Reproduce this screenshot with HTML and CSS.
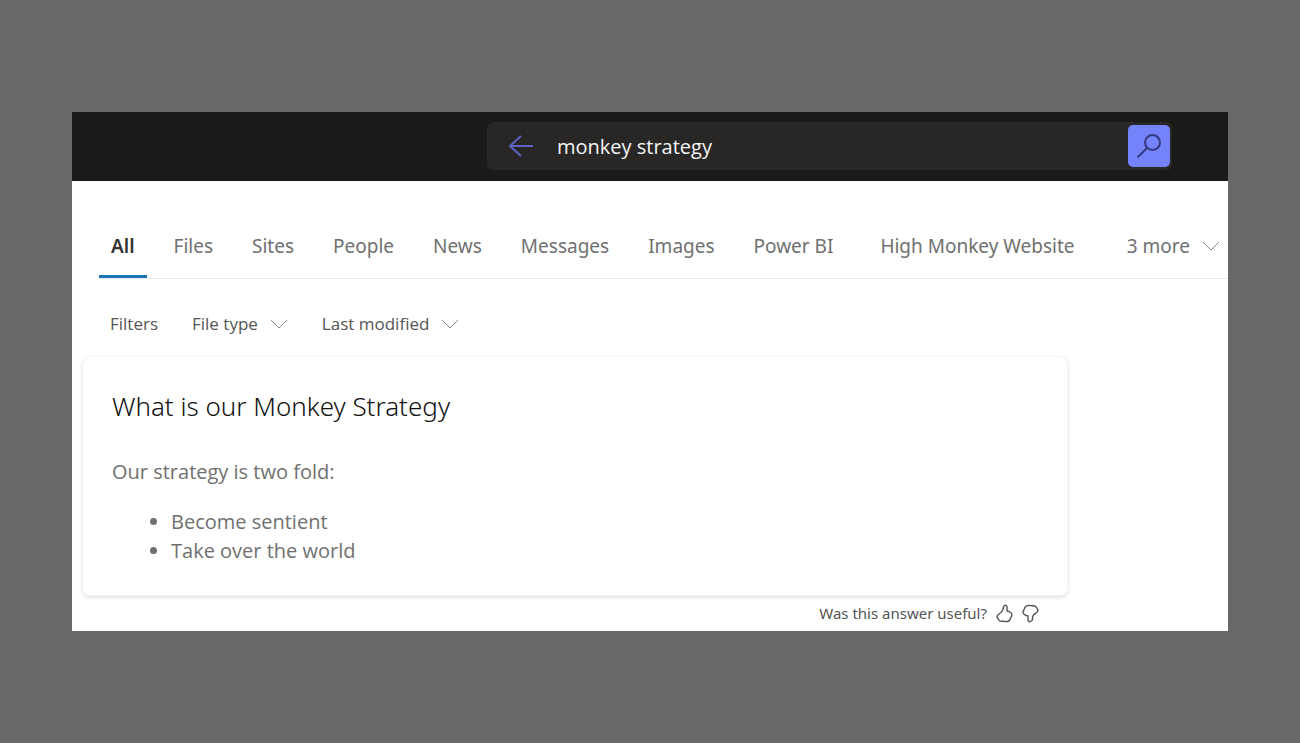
FILE: index.html
```
<!DOCTYPE html>
<html lang="en">
	<head>
		<meta charset="UTF-8">
		<title>monkey strategy - Search</title>
		<link rel="stylesheet" href="styles.css">
	</head>
	<body>
		<div class="window">
			<header class="topbar">
				<form class="search">
					<button class="back" type="button" aria-label="Back">
						<svg width="26" height="24" viewBox="0 0 26 24"><path d="M25 12H2M13 2L2 12L13 22"/></svg>
					</button>
					<input class="search-input" type="text" value="monkey strategy" aria-label="Search">
					<button class="search-btn" type="submit" aria-label="Search">
						<svg width="26" height="26" viewBox="0 0 26 26"><circle cx="16.500" cy="9.500" r="7.500"/><path d="M11 15L1.500 24.500"/></svg>
					</button>
				</form>
			</header>

			<nav class="tabs">
				<a class="tab active" href="#">All</a>
				<a class="tab" href="#">Files</a>
				<a class="tab" href="#">Sites</a>
				<a class="tab" href="#">People</a>
				<a class="tab" href="#">News</a>
				<a class="tab" href="#">Messages</a>
				<a class="tab" href="#">Images</a>
				<a class="tab" href="#">Power BI</a>
				<a class="tab custom" href="#">High Monkey Website</a>
				<button class="tab more" type="button">3 more
					<svg class="chevron" width="18" height="10" viewBox="0 0 18 10"><path d="M1 1L9 9L17 1"/></svg>
				</button>
			</nav>

			<div class="filters">
				<span class="filters-title">Filters</span>
				<button class="filter" type="button">File type
					<svg class="chevron" width="18" height="10" viewBox="0 0 18 10"><path d="M1 1L9 9L17 1"/></svg>
				</button>
				<button class="filter" type="button">Last modified
					<svg class="chevron" width="18" height="10" viewBox="0 0 18 10"><path d="M1 1L9 9L17 1"/></svg>
				</button>
			</div>

			<main class="result">
				<div class="answer">
					<h2 class="answer-title">What is our Monkey Strategy</h2>
					<p class="answer-text">Our strategy is two fold:</p>
					<ul class="answer-list">
						<li>Become sentient</li>
						<li>Take over the world</li>
					</ul>
				</div>
				<div class="feedback">
					<span>Was this answer useful?</span>
					<button class="vote" type="button" aria-label="Yes">
						<svg width="17" height="19" viewBox="0 0 17 19"><path d="M8.500 1.500C10 0.500 11.500 2 11 4L11 7C14 7.500 16.300 9 15.800 11.500L14.500 14.500C13.500 17.500 11.500 18 9 17.500L4 17C2.500 16.500 2.500 15 1.500 14C0.500 12.500 1.500 11 3 10C6 8 7.500 5 7.500 2.500Z"/></svg>
					</button>
					<button class="vote" type="button" aria-label="No">
						<svg class="down" width="17" height="19" viewBox="0 0 17 19"><path d="M8.500 1.500C10 0.500 11.500 2 11 4L11 7C14 7.500 16.300 9 15.800 11.500L14.500 14.500C13.500 17.500 11.500 18 9 17.500L4 17C2.500 16.500 2.500 15 1.500 14C0.500 12.500 1.500 11 3 10C5 9 6 8 6.500 6L6.500 3Z"/></svg>
					</button>
				</div>
			</main>
		</div>
	</body>
</html>
```
FILE: styles.css
```
* {
	box-sizing: border-box;
}
body,h2,p,ul {
	margin: 0;
	padding: 0;
}
body {
	min-height: 100vh;
	display: flex;
	align-items: center;
	padding: 0 72px;
	background-color: #68686a;
	font-family: "Open Sans", "Noto Sans", sans-serif;
	font-size: 20px;
	color: #707070;
}
button,input {
	font: inherit;
	color: inherit;
	border: none;
	padding: 0;
	background: none;
}
button {
	cursor: pointer;
}
a {
	color: inherit;
	text-decoration: none;
}
svg {
	display: block;
	fill: none;
	stroke: currentColor;
}

.window {
	width: 100%;
	background-color: #fff;
	overflow: hidden;
}

.topbar {
	display: flex;
	justify-content: flex-end;
	padding: 10px 56px 11px 16px;
	background-color: #1b1a19;
}
.search {
	display: flex;
	align-items: center;
	width: 685px;
	height: 48px;
	padding: 0 2px 0 21px;
	border-radius: 6px;
	background-color: #282726;
}
.back {
	color: #5f64c4;
	stroke-width: 2;
}
.search-input {
	flex: 1;
	min-width: 0;
	margin-left: 23px;
	color: #f4f4f4;
	outline: none;
}
.search-btn {
	display: flex;
	align-items: center;
	justify-content: center;
	width: 42px;
	height: 42px;
	border-radius: 5px;
	background-color: #7583fb;
	color: #33397c;
	stroke-width: 2;
}

.tabs {
	display: flex;
	gap: 15px;
	margin: 37px 0 0 27px;
	padding-right: 8px;
	border-bottom: 1px solid #eaeaea;
	font-family: "Noto Sans", "Open Sans", sans-serif;
	font-size: 19px;
	white-space: nowrap;
}
.tab {
	padding: 13px 12px 14px;
	line-height: 30px;
	border-bottom: 3px solid transparent;
}
.tab.active {
	color: #333;
	font-weight: 600;
	border-bottom-color: #1a75b5;
}
.custom {
	padding-left: 20px;
}
.more {
	display: flex;
	align-items: center;
	gap: 12px;
	margin-left: auto;
	padding-right: 0;
}
.chevron {
	color: #8c8c8c;
}

.filters {
	display: flex;
	gap: 34px;
	padding: 32px 38px 19px;
	font-size: 17px;
	line-height: 26px;
	color: #555;
}
.filters-title {
	font-weight: 500;
}
.filter {
	display: flex;
	align-items: center;
	gap: 12px;
	font-weight: 500;
}

.result {
	max-width: 996px;
	padding-left: 10px;
}
.answer {
	padding: 29px 29px 30px;
	border: 1px solid #f3f3f3;
	border-radius: 8px;
	box-shadow: 0 2px 4px rgba(0,0,0,0.12);
}
.answer-title {
	font-family: "Noto Sans", "Open Sans", sans-serif;
	font-size: 26px;
	font-weight: 300;
	line-height: 40px;
	color: #111;
}
.answer-text {
	margin-top: 31px;
	line-height: 30px;
}
.answer-list {
	margin-top: 20px;
	padding-left: 59px;
	line-height: 29px;
}
.feedback {
	display: flex;
	align-items: center;
	justify-content: flex-end;
	gap: 9px;
	padding: 4px 29px 5px 0;
	font-family: "Noto Sans", "Open Sans", sans-serif;
	font-size: 15px;
	line-height: 26px;
	color: #555;
}
.vote {
	stroke-width: 1.4;
}
.down {
	transform: rotate(180deg);
}
```
